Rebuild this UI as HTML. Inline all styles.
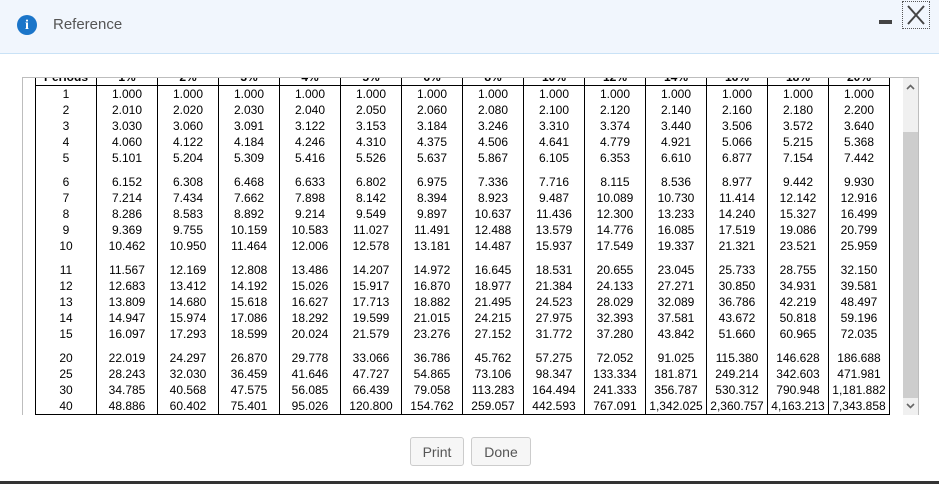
<!DOCTYPE html>
<html><head><style>
body{margin:0;width:939px;height:485px;overflow:hidden;background:#fff;font-family:"Liberation Sans",Arial,sans-serif;position:relative}
.hdr{position:absolute;left:0;top:0;width:939px;height:53px;background:#f1f6fd;border-bottom:1px solid #c9e2f6}
.ic{position:absolute;left:17px;top:15px;width:20px;height:20px;border-radius:50%;background:#1b75c9;color:#fff;font:bold 14px "Liberation Serif",serif;text-align:center;line-height:21px}
.tt{position:absolute;left:53px;top:16px;font-size:15px;color:#555}
.min{position:absolute;left:879px;top:20px;width:13px;height:4px;background:#444}
.x{position:absolute;left:902px;top:1px;width:28px;height:28px;border:1px dotted #555;box-sizing:border-box}
.box{position:absolute;left:22px;top:77px;width:897px;height:338px;border:1px solid #bdbdbd;border-bottom:none;box-sizing:border-box;overflow:hidden}
table{position:absolute;left:12px;top:-9px;border-collapse:collapse;font-size:12px;color:#000}
td{width:60px;text-align:center;height:16px;padding:0;line-height:16px;border-left:1.5px solid #000;border-right:1.5px solid #000}
th{height:16px;padding:0;font-size:12px;border:1.5px solid #000;border-top:none}
tr.sp td{height:8px}
tr.last td{border-bottom:2px solid #000}
.sb{position:absolute;left:903px;top:78px;width:15px;height:337px;background:#f0f0f0}
.th{position:absolute;left:903px;top:132px;width:15px;height:266px;background:#cdcdcd}
.ar{position:absolute;left:906px}
.btn{position:absolute;top:437px;height:29px;border:1px solid #ccc;border-radius:3px;background:#f6f6f6;color:#555;font-size:14px;line-height:29px;text-align:center;box-sizing:border-box}
.bot{position:absolute;left:0;top:481px;width:939px;height:3px;background:#333}
</style></head><body>
<div class="hdr"><div class="ic">i</div><div class="tt">Reference</div><div class="min"></div>
<div class="x"><svg width="26" height="26" viewBox="0 0 26 26"><path d="M5 4L21 22M21 4L5 22" stroke="#444" stroke-width="2"/></svg></div></div>
<div class="box"><table>
<tr><th>Periods</th><th>1%</th><th>2%</th><th>3%</th><th>4%</th><th>5%</th><th>6%</th><th>8%</th><th>10%</th><th>12%</th><th>14%</th><th>16%</th><th>18%</th><th>20%</th></tr>
<tr><td>1</td><td>1.000</td><td>1.000</td><td>1.000</td><td>1.000</td><td>1.000</td><td>1.000</td><td>1.000</td><td>1.000</td><td>1.000</td><td>1.000</td><td>1.000</td><td>1.000</td><td>1.000</td></tr>
<tr><td>2</td><td>2.010</td><td>2.020</td><td>2.030</td><td>2.040</td><td>2.050</td><td>2.060</td><td>2.080</td><td>2.100</td><td>2.120</td><td>2.140</td><td>2.160</td><td>2.180</td><td>2.200</td></tr>
<tr><td>3</td><td>3.030</td><td>3.060</td><td>3.091</td><td>3.122</td><td>3.153</td><td>3.184</td><td>3.246</td><td>3.310</td><td>3.374</td><td>3.440</td><td>3.506</td><td>3.572</td><td>3.640</td></tr>
<tr><td>4</td><td>4.060</td><td>4.122</td><td>4.184</td><td>4.246</td><td>4.310</td><td>4.375</td><td>4.506</td><td>4.641</td><td>4.779</td><td>4.921</td><td>5.066</td><td>5.215</td><td>5.368</td></tr>
<tr><td>5</td><td>5.101</td><td>5.204</td><td>5.309</td><td>5.416</td><td>5.526</td><td>5.637</td><td>5.867</td><td>6.105</td><td>6.353</td><td>6.610</td><td>6.877</td><td>7.154</td><td>7.442</td></tr>
<tr class="sp"><td></td><td></td><td></td><td></td><td></td><td></td><td></td><td></td><td></td><td></td><td></td><td></td><td></td><td></td></tr>
<tr><td>6</td><td>6.152</td><td>6.308</td><td>6.468</td><td>6.633</td><td>6.802</td><td>6.975</td><td>7.336</td><td>7.716</td><td>8.115</td><td>8.536</td><td>8.977</td><td>9.442</td><td>9.930</td></tr>
<tr><td>7</td><td>7.214</td><td>7.434</td><td>7.662</td><td>7.898</td><td>8.142</td><td>8.394</td><td>8.923</td><td>9.487</td><td>10.089</td><td>10.730</td><td>11.414</td><td>12.142</td><td>12.916</td></tr>
<tr><td>8</td><td>8.286</td><td>8.583</td><td>8.892</td><td>9.214</td><td>9.549</td><td>9.897</td><td>10.637</td><td>11.436</td><td>12.300</td><td>13.233</td><td>14.240</td><td>15.327</td><td>16.499</td></tr>
<tr><td>9</td><td>9.369</td><td>9.755</td><td>10.159</td><td>10.583</td><td>11.027</td><td>11.491</td><td>12.488</td><td>13.579</td><td>14.776</td><td>16.085</td><td>17.519</td><td>19.086</td><td>20.799</td></tr>
<tr><td>10</td><td>10.462</td><td>10.950</td><td>11.464</td><td>12.006</td><td>12.578</td><td>13.181</td><td>14.487</td><td>15.937</td><td>17.549</td><td>19.337</td><td>21.321</td><td>23.521</td><td>25.959</td></tr>
<tr class="sp"><td></td><td></td><td></td><td></td><td></td><td></td><td></td><td></td><td></td><td></td><td></td><td></td><td></td><td></td></tr>
<tr><td>11</td><td>11.567</td><td>12.169</td><td>12.808</td><td>13.486</td><td>14.207</td><td>14.972</td><td>16.645</td><td>18.531</td><td>20.655</td><td>23.045</td><td>25.733</td><td>28.755</td><td>32.150</td></tr>
<tr><td>12</td><td>12.683</td><td>13.412</td><td>14.192</td><td>15.026</td><td>15.917</td><td>16.870</td><td>18.977</td><td>21.384</td><td>24.133</td><td>27.271</td><td>30.850</td><td>34.931</td><td>39.581</td></tr>
<tr><td>13</td><td>13.809</td><td>14.680</td><td>15.618</td><td>16.627</td><td>17.713</td><td>18.882</td><td>21.495</td><td>24.523</td><td>28.029</td><td>32.089</td><td>36.786</td><td>42.219</td><td>48.497</td></tr>
<tr><td>14</td><td>14.947</td><td>15.974</td><td>17.086</td><td>18.292</td><td>19.599</td><td>21.015</td><td>24.215</td><td>27.975</td><td>32.393</td><td>37.581</td><td>43.672</td><td>50.818</td><td>59.196</td></tr>
<tr><td>15</td><td>16.097</td><td>17.293</td><td>18.599</td><td>20.024</td><td>21.579</td><td>23.276</td><td>27.152</td><td>31.772</td><td>37.280</td><td>43.842</td><td>51.660</td><td>60.965</td><td>72.035</td></tr>
<tr class="sp"><td></td><td></td><td></td><td></td><td></td><td></td><td></td><td></td><td></td><td></td><td></td><td></td><td></td><td></td></tr>
<tr><td>20</td><td>22.019</td><td>24.297</td><td>26.870</td><td>29.778</td><td>33.066</td><td>36.786</td><td>45.762</td><td>57.275</td><td>72.052</td><td>91.025</td><td>115.380</td><td>146.628</td><td>186.688</td></tr>
<tr><td>25</td><td>28.243</td><td>32.030</td><td>36.459</td><td>41.646</td><td>47.727</td><td>54.865</td><td>73.106</td><td>98.347</td><td>133.334</td><td>181.871</td><td>249.214</td><td>342.603</td><td>471.981</td></tr>
<tr><td>30</td><td>34.785</td><td>40.568</td><td>47.575</td><td>56.085</td><td>66.439</td><td>79.058</td><td>113.283</td><td>164.494</td><td>241.333</td><td>356.787</td><td>530.312</td><td>790.948</td><td>1,181.882</td></tr>
<tr class="last"><td>40</td><td>48.886</td><td>60.402</td><td>75.401</td><td>95.026</td><td>120.800</td><td>154.762</td><td>259.057</td><td>442.593</td><td>767.091</td><td>1,342.025</td><td>2,360.757</td><td>4,163.213</td><td>7,343.858</td></tr>
</table></div>
<div class="sb"></div><div class="th"></div>
<svg class="ar" style="top:84px" width="9" height="6" viewBox="0 0 9 6"><path d="M1 5L4.5 1.5L8 5" stroke="#666" stroke-width="1.6" fill="none"/></svg>
<svg class="ar" style="top:403px" width="9" height="6" viewBox="0 0 9 6"><path d="M1 1L4.5 4.5L8 1" stroke="#666" stroke-width="1.6" fill="none"/></svg>
<div class="btn" style="left:410px;width:54px">Print</div>
<div class="btn" style="left:471px;width:60px">Done</div>
<div class="bot"></div>
</body></html>
